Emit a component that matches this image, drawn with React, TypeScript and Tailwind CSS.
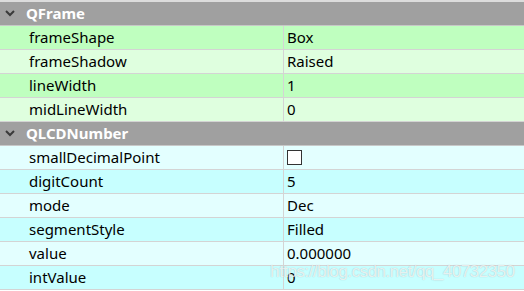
import React from "react";

type Row = { name: string; value?: string; check?: boolean };

const groups: { title: string; colors: [string, string]; rows: Row[] }[] = [
  {
    title: "QFrame",
    colors: ["bg-[#bfffbf]", "bg-[#dfffdf]"],
    rows: [
      { name: "frameShape", value: "Box" },
      { name: "frameShadow", value: "Raised" },
      { name: "lineWidth", value: "1" },
      { name: "midLineWidth", value: "0" },
    ],
  },
  {
    title: "QLCDNumber",
    colors: ["bg-[#e3ffff]", "bg-[#c7ffff]"],
    rows: [
      { name: "smallDecimalPoint", check: true },
      { name: "digitCount", value: "5" },
      { name: "mode", value: "Dec" },
      { name: "segmentStyle", value: "Filled" },
      { name: "value", value: "0.000000" },
      { name: "intValue", value: "0" },
    ],
  },
];

function Chevron() {
  return (
    <svg width="10" height="7" viewBox="0 0 10 7" className="ml-[5px] mr-[11px]">
      <path d="M1 1 L5 5 L9 1" fill="none" stroke="#3a3a3a" strokeWidth="2" />
    </svg>
  );
}

export default function App() {
  return (
    <div className="relative w-[524px] h-[291px] overflow-hidden bg-white font-['Noto_Sans',sans-serif] text-[15px] text-black">
      <div className="h-[2px] bg-[#dcdcdc]" />
      {groups.map((g) => (
        <div key={g.title}>
          <div className="h-[24px] flex items-center bg-[#a0a0a0] border-b border-[#c8c8c8]">
            <Chevron />
            <span className="font-bold text-white">{g.title}</span>
          </div>
          {g.rows.map((r, i) => (
            <div key={r.name} className={`h-[24px] flex border-b border-[#d4d4d4] ${g.colors[i % 2]}`}>
              <div className="w-[284px] flex items-center pl-[29px] border-r border-[#d4d4d4]">{r.name}</div>
              <div className="flex-1 flex items-center pl-[3px]">
                {r.check ? (
                  <span className="block w-[15px] h-[15px] border-[1.5px] border-[#333] bg-white" />
                ) : (
                  r.value
                )}
              </div>
            </div>
          ))}
        </div>
      ))}
      <div className="absolute left-[270px] top-[263px] leading-none font-['Liberation_Sans',Arial,sans-serif] text-[17px] tracking-[-0.5px] text-white/75 [text-shadow:0_0_1px_rgba(0,0,0,0.25)]">
        https://blog.csdn.net/qq_40732350
      </div>
    </div>
  );
}
